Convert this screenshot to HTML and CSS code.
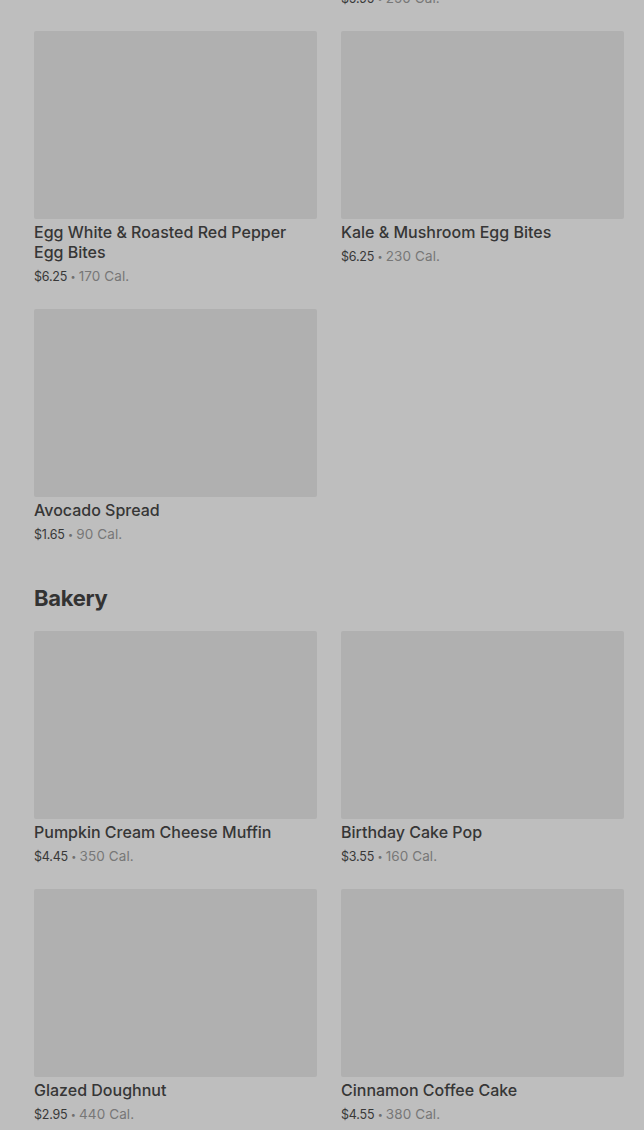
FILE: index.html
```html
<!DOCTYPE html>
<html lang="en">
<head>
<meta charset="utf-8">
<title>Menu</title>
<link rel="stylesheet" href="styles.css">
</head>
<body>
<main class="menu">
  <section class="section scrolled">
    <div class="grid">
      <article class="card">
        <div class="thumb"></div>
        <h3 class="name">Spinach, Feta &amp; Egg White Wrap</h3>
        <p class="meta"><span class="price">$4.95</span> <span class="dot">•</span> <span class="cal">290 Cal.</span></p>
      </article>
      <article class="card">
        <div class="thumb"></div>
        <h3 class="name">Bacon &amp; Gruyère Egg Bites Sandwich Box</h3>
        <p class="meta"><span class="price">$5.95</span> <span class="dot">•</span> <span class="cal">250 Cal.</span></p>
      </article>
      <article class="card">
        <div class="thumb"></div>
        <h3 class="name">Egg White &amp; Roasted Red Pepper Egg Bites</h3>
        <p class="meta"><span class="price">$6.25</span> <span class="dot">•</span> <span class="cal">170 Cal.</span></p>
      </article>
      <article class="card">
        <div class="thumb"></div>
        <h3 class="name">Kale &amp; Mushroom Egg Bites</h3>
        <p class="meta"><span class="price">$6.25</span> <span class="dot">•</span> <span class="cal">230 Cal.</span></p>
      </article>
      <article class="card">
        <div class="thumb"></div>
        <h3 class="name">Avocado Spread</h3>
        <p class="meta"><span class="price">$1.65</span> <span class="dot">•</span> <span class="cal">90 Cal.</span></p>
      </article>
    </div>
  </section>
  <section class="section">
    <h2 class="heading">Bakery</h2>
    <div class="grid">
      <article class="card">
        <div class="thumb"></div>
        <h3 class="name">Pumpkin Cream Cheese Muffin</h3>
        <p class="meta"><span class="price">$4.45</span> <span class="dot">•</span> <span class="cal">350 Cal.</span></p>
      </article>
      <article class="card">
        <div class="thumb"></div>
        <h3 class="name">Birthday Cake Pop</h3>
        <p class="meta"><span class="price">$3.55</span> <span class="dot">•</span> <span class="cal">160 Cal.</span></p>
      </article>
      <article class="card">
        <div class="thumb"></div>
        <h3 class="name">Glazed Doughnut</h3>
        <p class="meta"><span class="price">$2.95</span> <span class="dot">•</span> <span class="cal">440 Cal.</span></p>
      </article>
      <article class="card">
        <div class="thumb"></div>
        <h3 class="name">Cinnamon Coffee Cake</h3>
        <p class="meta"><span class="price">$4.55</span> <span class="dot">•</span> <span class="cal">380 Cal.</span></p>
      </article>
    </div>
  </section>
</main>
</body>
</html>
```
FILE: styles.css
```css
html, body {
  margin: 0;
  padding: 0;
  background: #bebebe;
  overflow: hidden;
}
body {
  font-family: "Inter", "Roboto", "Liberation Sans", sans-serif;
  color: #383838;
}
.menu {
  padding: 0 20px 0 34px;
}
.scrolled {
  margin-top: -247px;
}
.grid {
  display: grid;
  grid-template-columns: 283px 283px;
  column-gap: 24px;
  row-gap: 24px;
  align-items: start;
}
.card {
  display: flex;
  flex-direction: column;
}
.thumb {
  height: 188px;
  background: #b0b0b0;
  border-radius: 2px;
}
.name {
  margin: 3px 0 0;
  font-size: 16px;
  line-height: 20px;
  font-weight: 500;
  color: #363636;
}
.meta {
  margin: 5px 0 0;
  height: 18px;
  font-size: 12.5px;
  line-height: 18px;
  letter-spacing: -0.2px;
}
.price {
  color: #383838;
}
.dot {
  color: #6f6f6f;
  font-size: 9px;
  line-height: 0;
  vertical-align: 1px;
}
.cal {
  color: #777;
  font-size: 13.5px;
  letter-spacing: 0.1px;
}
.heading {
  margin: 41px 0 19px;
  font-size: 22px;
  line-height: 28px;
  font-weight: 700;
  color: #333;
  letter-spacing: -0.3px;
}
```
